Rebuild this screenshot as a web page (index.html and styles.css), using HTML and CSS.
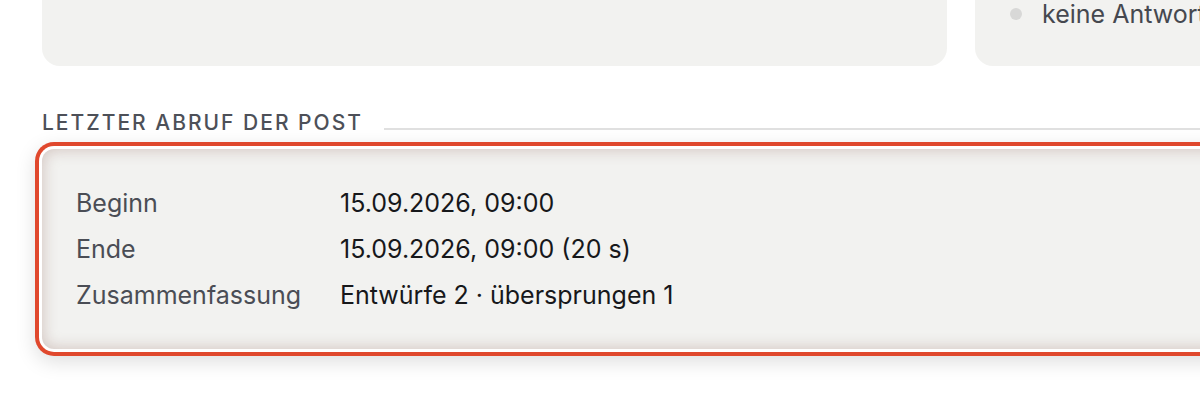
FILE: index.html
```html
<!DOCTYPE html>
<html lang="de">
<head>
<meta charset="utf-8">
<title>Letzter Abruf der Post</title>
<link rel="stylesheet" href="styles.css">
</head>
<body>
<div class="page">
  <div class="top-row">
    <div class="panel"></div>
    <div class="panel panel-status">
      <ul class="status-list">
        <li class="status-item"><span class="dot"></span>keine Antwort</li>
      </ul>
    </div>
  </div>

  <section class="fetch">
    <h2 class="section-title"><span>Letzter Abruf der Post</span></h2>
    <div class="fetch-card">
      <dl class="fetch-grid">
        <dt>Beginn</dt>
        <dd>15.09.2026, 09:00</dd>
        <dt>Ende</dt>
        <dd>15.09.2026, 09:00 (20 s)</dd>
        <dt>Zusammenfassung</dt>
        <dd>Entwürfe 2 · übersprungen 1</dd>
      </dl>
    </div>
  </section>
</div>
</body>
</html>
```

FILE: styles.css
```css
html {
  margin: 0;
  padding: 0;
  background: #ffffff;
  overflow: hidden;
}

body {
  margin: 0;
  padding: 0;
  font-family: Inter, "Noto Sans", "Liberation Sans", sans-serif;
  color: #1b1c1f;
}

.page {
  width: 1340px;
  padding-left: 42px;
  padding-bottom: 40px;
}

.top-row {
  display: grid;
  grid-template-columns: 905px 1fr;
  gap: 28px;
  margin-top: -60px;
}

.panel {
  background: #f2f2f0;
  border-radius: 18px;
  height: 126px;
}

.panel-status {
  display: flex;
  align-items: flex-end;
  padding: 0 0 36px 35px;
  box-sizing: border-box;
}

.status-list {
  list-style: none;
  margin: 0;
  padding: 0;
}

.status-item {
  display: flex;
  align-items: center;
  gap: 20px;
  font-size: 25px;
  line-height: 32px;
  color: #45484f;
  white-space: nowrap;
}

.dot {
  width: 12px;
  height: 12px;
  border-radius: 50%;
  background: #d8d8d7;
}

.fetch {
  margin-top: 43px;
}

.section-title {
  display: flex;
  align-items: flex-end;
  margin: 0;
  font-size: 21px;
  font-weight: 500;
  letter-spacing: 2px;
  text-transform: uppercase;
  line-height: 28px;
  color: #4d5058;
}

.section-title::after {
  content: "";
  flex: 1;
  height: 2px;
  background: #e0e0e0;
  margin: 0 0 7px 21px;
}

.fetch-card {
  margin-top: 12px;
  background: #f2f2f0;
  border-radius: 12px;
  padding: 37px 34px 37px;
  box-shadow:
    inset 0 0 14px 2px rgba(150, 105, 95, 0.30),
    0 0 0 3px #ffffff,
    0 0 0 7px #e0482d,
    0 6px 20px 7px rgba(0, 0, 0, 0.13);
}

.fetch-grid {
  display: grid;
  grid-template-columns: 264px 1fr;
  row-gap: 12px;
  margin: 0;
  font-size: 25px;
  line-height: 34px;
}

.fetch-grid dt {
  color: #4a4d55;
}

.fetch-grid dd {
  margin: 0;
  color: #17181b;
}
```
